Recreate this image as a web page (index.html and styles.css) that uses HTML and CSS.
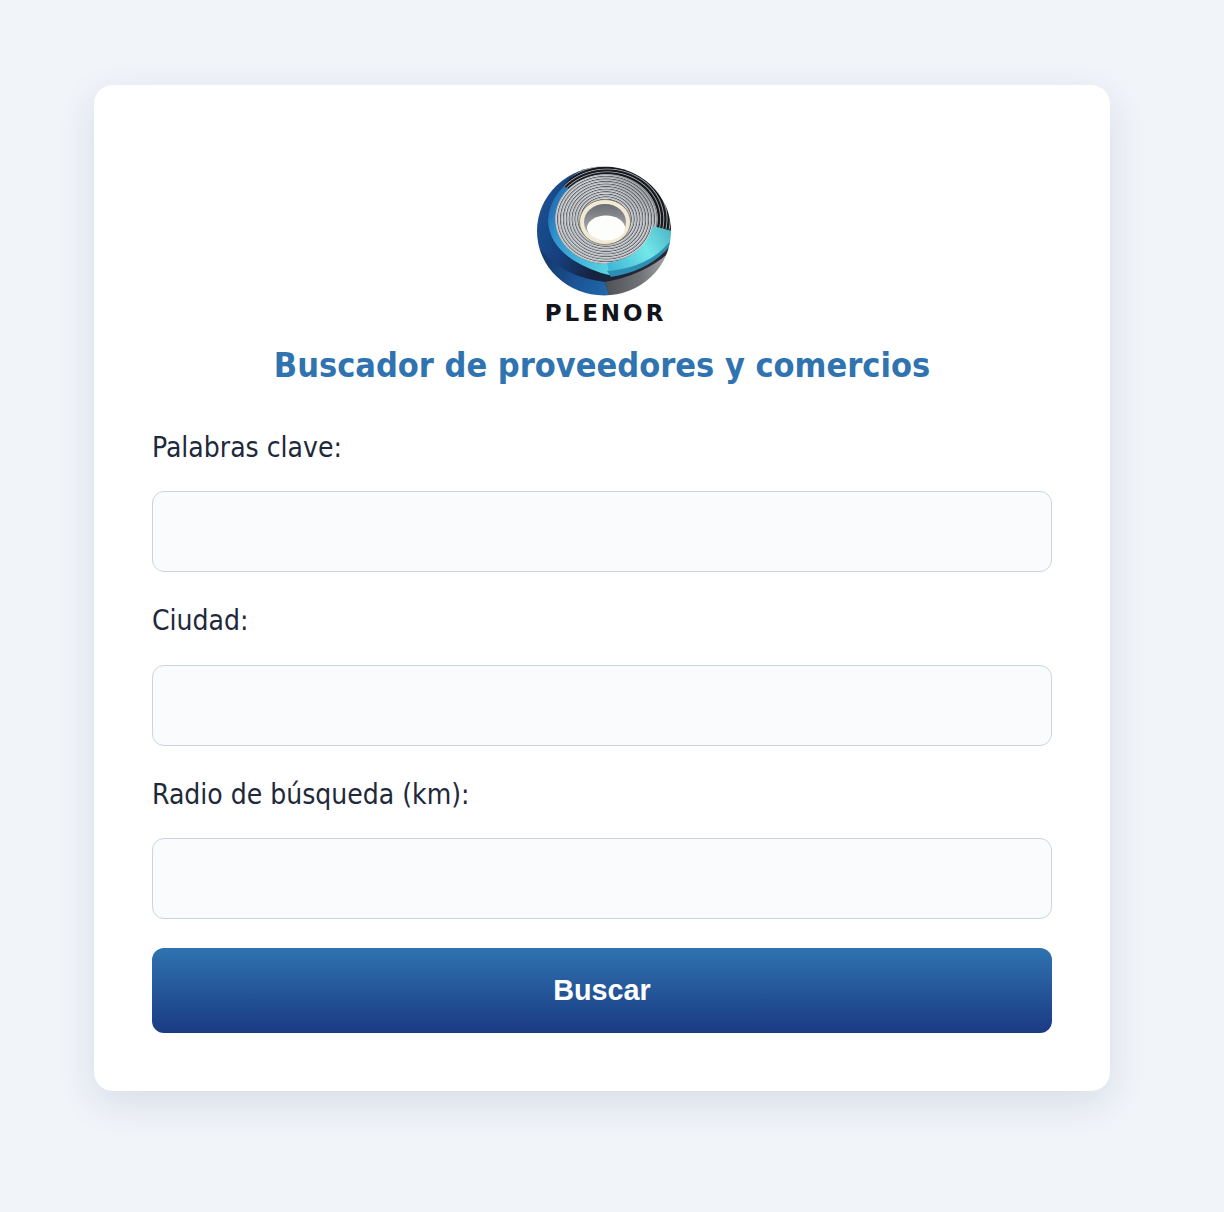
FILE: index.html
```html
<!DOCTYPE html>
<html lang="es">
<head>
<meta charset="utf-8">
<title>Buscador de proveedores y comercios</title>
<link rel="stylesheet" href="styles.css">
</head>
<body>
<main class="card">
  <div class="logo">
    <svg class="logo-mark" viewBox="0 0 134 130" width="134" height="130" role="img" aria-label="Logo Plenor">
      <defs>
        <linearGradient id="base" x1="0" y1="0.2" x2="1" y2="0.5">
          <stop offset="0" stop-color="#1c5597"/>
          <stop offset=".3" stop-color="#173f7d"/>
          <stop offset=".55" stop-color="#15243f"/>
          <stop offset="1" stop-color="#2a2c31"/>
        </linearGradient>
        <linearGradient id="wall" x1="0" y1="0" x2="1" y2="0">
          <stop offset="0" stop-color="#4f5155"/>
          <stop offset=".5" stop-color="#717377"/>
          <stop offset="1" stop-color="#b3b5b6"/>
        </linearGradient>
        <linearGradient id="cyan" gradientUnits="userSpaceOnUse" x1="10" y1="30" x2="134" y2="90">
          <stop offset="0" stop-color="#1f5ea8"/>
          <stop offset=".18" stop-color="#2f94cf"/>
          <stop offset=".45" stop-color="#45bcdc"/>
          <stop offset=".8" stop-color="#72e6ea"/>
          <stop offset="1" stop-color="#58c6d2"/>
        </linearGradient>
        <linearGradient id="tip" gradientUnits="userSpaceOnUse" x1="70" y1="104" x2="134" y2="66">
          <stop offset="0" stop-color="#3bb4d4"/>
          <stop offset=".6" stop-color="#73e7ea"/>
          <stop offset="1" stop-color="#4eb8c8"/>
        </linearGradient>
        <linearGradient id="low" gradientUnits="userSpaceOnUse" x1="0" y1="80" x2="72" y2="125">
          <stop offset="0" stop-color="#12305d"/>
          <stop offset=".65" stop-color="#1c5698"/>
          <stop offset="1" stop-color="#2168a8"/>
        </linearGradient>
        <radialGradient id="outerstripes" gradientUnits="userSpaceOnUse" cx="0" cy="0" r="3.2" spreadMethod="repeat" gradientTransform="translate(70 53) scale(1 .88)">
          <stop offset="0" stop-color="#14171d"/>
          <stop offset=".45" stop-color="#1a1d23"/>
          <stop offset=".75" stop-color="#a0a4a9"/>
          <stop offset="1" stop-color="#23262c"/>
        </radialGradient>
        <radialGradient id="coil" gradientUnits="userSpaceOnUse" cx="0" cy="0" r="2.9" spreadMethod="repeat" gradientTransform="translate(69 53) scale(1 .88)">
          <stop offset="0" stop-color="#d8dadc"/>
          <stop offset=".5" stop-color="#a9acb0"/>
          <stop offset=".75" stop-color="#55585e"/>
          <stop offset="1" stop-color="#d8dadc"/>
        </radialGradient>
        <linearGradient id="coilshade" x1="0" y1="1" x2="1" y2="0">
          <stop offset="0" stop-color="#c9d0d6" stop-opacity=".25"/>
          <stop offset=".6" stop-color="#8b8e93" stop-opacity="0"/>
          <stop offset="1" stop-color="#0c0e13" stop-opacity=".45"/>
        </linearGradient>
        <linearGradient id="holewall" x1="0" y1="0" x2="0" y2="1">
          <stop offset="0" stop-color="#6a6d71"/>
          <stop offset="1" stop-color="#bcbec0"/>
        </linearGradient>
        <clipPath id="disc"><ellipse cx="67" cy="65" rx="67" ry="64.5"/></clipPath>
        <filter id="soft" x="-5%" y="-5%" width="110%" height="110%"><feGaussianBlur stdDeviation=".35"/></filter>
      </defs>
      <g clip-path="url(#disc)">
        <g filter="url(#soft)">
          <rect x="-5" y="-5" width="144" height="140" fill="url(#base)"/>
          <path d="M-5 72 Q18 110 68 116 L74 135 H-5Z" fill="url(#low)"/>
          <path d="M68 116 L74 135 H139 V80 Q112 108 68 116Z" fill="url(#wall)"/>
          <path d="M30 18 Q12 32 11 55 Q12 78 36 94 Q54 105 72 109 Q116 106 139 66 L108 60 L70 50Z" fill="url(#cyan)"/>
          <path d="M70 105 Q110 98 139 66 L139 72 Q118 104 74 111Z" fill="#2f8fb4"/>
          <path d="M26 20 Q46 -5 84 -4 Q124 8 139 64 L110 62 Z" fill="url(#outerstripes)"/>
          <ellipse cx="69" cy="53" rx="51" ry="45" fill="url(#coil)"/>
          <ellipse cx="69" cy="53" rx="51" ry="45" fill="url(#coilshade)"/>
          <path d="M116 60 L139 66 Q120 100 72 105 L70 97 Q106 92 116 60Z" fill="url(#tip)"/>
        </g>
      </g>
      <g filter="url(#soft)">
        <ellipse cx="68" cy="56" rx="25.5" ry="22.5" fill="#efe9d6"/>
        <ellipse cx="68" cy="56" rx="25.5" ry="22.5" fill="none" stroke="#7a6750" stroke-width=".7"/>
        <ellipse cx="68" cy="56" rx="21" ry="18" fill="url(#holewall)"/>
        <ellipse cx="69" cy="62" rx="19" ry="12.5" fill="#fdfdfb"/>
      </g>
    </svg>
    <span class="logo-name">PLENOR</span>
  </div>
  <h1 class="title">Buscador de proveedores y comercios</h1>
  <form class="form">
    <div class="field">
      <label class="label" for="kw">Palabras clave:</label>
      <input class="input" id="kw" type="text">
    </div>
    <div class="field">
      <label class="label" for="city">Ciudad:</label>
      <input class="input" id="city" type="text">
    </div>
    <div class="field">
      <label class="label" for="radius">Radio de búsqueda (km):</label>
      <input class="input" id="radius" type="text">
    </div>
    <button class="button" type="button">Buscar</button>
  </form>
</main>
</body>
</html>
```

FILE: styles.css
```css
* { box-sizing: border-box; }

html, body { margin: 0; }

body {
  min-height: 1212px;
  padding: 85px 114px 121px 94px;
  background: #f1f4f9;
  font-family: "DejaVu Sans Condensed", "DejaVu Sans", sans-serif;
}

.card {
  width: 1016px;
  height: 1006px;
  padding: 81px 58px 58px;
  background: #fff;
  border-radius: 19px;
  box-shadow: 0 12px 38px rgba(30, 58, 110, 0.12);
}

.logo {
  display: flex;
  flex-direction: column;
  align-items: center;
  height: 158px;
}

.logo-mark { display: block; flex: none; margin-left: 4px; }

.logo-name {
  margin-top: 6px;
  margin-left: 7px;
  font-family: "DejaVu Sans", sans-serif;
  font-size: 23px;
  line-height: 22px;
  font-weight: 700;
  letter-spacing: 3px;
  color: #12151c;
}

.title {
  margin: 0;
  padding-top: 20px;
  text-align: center;
  font-size: 34px;
  line-height: 42px;
  font-weight: 700;
  color: #2f73b0;
}

.form {
  display: flex;
  flex-direction: column;
  padding-top: 31.7px;
}

.field {
  display: flex;
  flex-direction: column;
  padding-bottom: 19px;
}

.label {
  height: 73.5px;
  padding-top: 14px;
  font-size: 28px;
  line-height: 32px;
  color: #1e293b;
}

.input {
  display: block;
  width: 100%;
  height: 81px;
  padding: 16px;
  border: 1px solid #cbd5e0;
  border-radius: 12px;
  background: #f9fbfd;
  font: inherit;
}

.button {
  display: block;
  width: 100%;
  height: 85px;
  margin-top: 10px;
  border: 0;
  border-radius: 12px;
  background: linear-gradient(#2f73b0, #1a3a84);
  color: #fff;
  font-family: "Liberation Sans", Arial, sans-serif;
  font-size: 28.8px;
  font-weight: 700;
}
```
